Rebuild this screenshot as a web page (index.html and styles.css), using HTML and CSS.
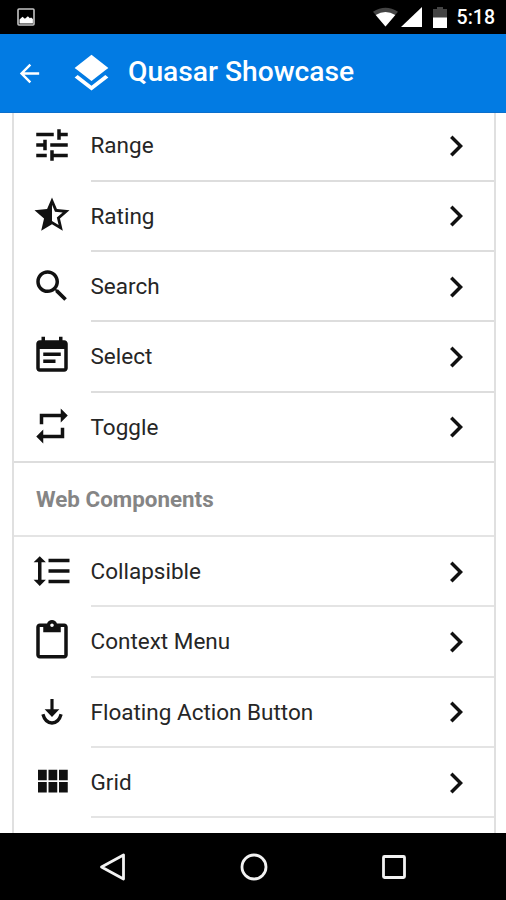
FILE: index.html
```html
<!DOCTYPE html>
<html lang="en">
<head>
<meta charset="utf-8">
<title>Quasar Showcase</title>
<link rel="stylesheet" href="styles.css">
</head>
<body>
<svg class="defs" aria-hidden="true">
  <symbol id="chevron" viewBox="0 0 24 24"><path d="M10 6L8.590 7.410 13.170 12l-4.580 4.590L10 18l6-6z"/></symbol>
</svg>
<div class="status">
  <svg class="photo" viewBox="0 0 18 18"><rect x="1" y="1" width="16" height="16" rx="1" fill="none" stroke="#c4c4c4" stroke-width="1.6"/><path fill="#fff" d="M2.500 15.500v-4l3-2.800 2.400 2 3-2.400 2 2 1.200-.9 1.800 1.600v4.500z"/></svg>
  <div class="indicators">
    <svg class="wifi" viewBox="0 0 26 20"><path fill="#444" d="M0 4.500Q13-4 26 4.500L13 20z"/><path fill="#fff" d="M2.800 8Q13 1.500 23.200 8L13 20z"/></svg>
    <svg class="signal" viewBox="0 0 21 20"><path fill="#fff" d="M21 0v20H0z"/></svg>
    <svg class="battery" viewBox="0 0 14 21"><path fill="#444" d="M0 2h4V0h6v2h4v9H0z"/><path fill="#fff" d="M0 10.500h14V21H0z"/></svg>
    <span class="clock">5:18</span>
  </div>
</div>
<header class="toolbar">
  <svg class="back" viewBox="0 0 24 24"><path d="M20 11H7.830l5.590-5.590L12 4l-8 8 8 8 1.410-1.410L7.830 13H20v-2z"/></svg>
  <svg class="logo" viewBox="0 0 24 24"><path d="M11.990 18.540l-7.370-5.730L3 14.070l9 7 9-7-1.630-1.270-7.380 5.740zM12 16l7.360-5.730L21 9l-9-7-9 7 1.630 1.270L12 16z"/></svg>
  <h1>Quasar Showcase</h1>
</header>
<main>
  <div class="list">
    <div class="row">
      <svg class="icon" viewBox="0 0 24 24"><path d="M3 17v2h6v-2H3zM3 5v2h10V5H3zm10 16v-2h8v-2h-8v-2h-2v6h2zM7 9v2H3v2h4v2h2V9H7zm14 4v-2H11v2h10zm-6-4h2V7h4V5h-4V3h-2v6z"/></svg>
      <div class="content"><span>Range</span><svg class="chevron"><use href="#chevron"/></svg></div>
    </div>
    <div class="row">
      <svg class="icon" viewBox="0 0 24 24"><path d="M22 9.240l-7.190-.62L12 2 9.190 8.630 2 9.240l5.460 4.730L5.820 21 12 17.270 18.180 21l-1.630-7.030L22 9.240zM12 15.400V6.100l1.710 4.040 4.380.38-3.320 2.880 1 4.280L12 15.400z"/></svg>
      <div class="content"><span>Rating</span><svg class="chevron"><use href="#chevron"/></svg></div>
    </div>
    <div class="row">
      <svg class="icon" viewBox="0 0 24 24"><path d="M15.500 14h-.79l-.28-.27C15.410 12.590 16 11.110 16 9.500 16 5.910 13.090 3 9.500 3S3 5.910 3 9.500 5.910 16 9.500 16c1.610 0 3.090-.59 4.230-1.570l.27.28v.79l5 4.990L20.490 19l-4.990-5zm-6 0C7.010 14 5 11.990 5 9.500S7.010 5 9.500 5 14 7.010 14 9.500 11.990 14 9.500 14z"/></svg>
      <div class="content"><span>Search</span><svg class="chevron"><use href="#chevron"/></svg></div>
    </div>
    <div class="row">
      <svg class="icon" viewBox="0 0 24 24"><path d="M17 10H7v2h10v-2zm2-7h-1V1h-2v2H8V1H6v2H5c-1.110 0-1.990.9-1.990 2L3 19c0 1.100.89 2 2 2h14c1.100 0 2-.9 2-2V5c0-1.100-.9-2-2-2zm0 16H5V8h14v11zm-5-5H7v2h7v-2z"/></svg>
      <div class="content"><span>Select</span><svg class="chevron"><use href="#chevron"/></svg></div>
    </div>
    <div class="row last">
      <svg class="icon" viewBox="0 0 24 24"><path d="M7 7h10v3l4-4-4-4v3H5v6h2V7zm10 10H7v-3l-4 4 4 4v-3h12v-6h-2v4z"/></svg>
      <div class="content"><span>Toggle</span><svg class="chevron"><use href="#chevron"/></svg></div>
    </div>
    <h2>Web Components</h2>
    <div class="row">
      <svg class="icon" viewBox="0 0 24 24"><path d="M6 7h2.500L5 3.500 1.500 7H4v10H1.500L5 20.500 8.500 17H6V7zm4-2v2h12V5H10zm0 14h12v-2H10v2zm0-6h12v-2H10v2z"/></svg>
      <div class="content"><span>Collapsible</span><svg class="chevron"><use href="#chevron"/></svg></div>
    </div>
    <div class="row">
      <svg class="icon" viewBox="0 0 24 24"><path d="M19 2h-4.180C14.400.84 13.300 0 12 0c-1.300 0-2.400.84-2.820 2H5c-1.100 0-2 .9-2 2v16c0 1.100.9 2 2 2h14c1.100 0 2-.9 2-2V4c0-1.100-.9-2-2-2zm-7 0c.55 0 1 .45 1 1s-.45 1-1 1-1-.45-1-1 .45-1 1-1zm7 18H5V4h2v3h10V4h2v16z"/></svg>
      <div class="content"><span>Context Menu</span><svg class="chevron"><use href="#chevron"/></svg></div>
    </div>
    <div class="row">
      <svg class="icon" viewBox="0 0 24 24"><path d="M11.100 4.600h1.800v5.800h3.300L12 14.800l-4.200-4.400h3.300z"/><path d="M6.800 13.300Q8.200 18.300 12 18.300T17.200 13.300" fill="none" stroke="#111" stroke-width="1.900"/></svg>
      <div class="content"><span>Floating Action Button</span><svg class="chevron"><use href="#chevron"/></svg></div>
    </div>
    <div class="row">
      <svg class="icon" viewBox="0 0 24 24"><path d="M4 11h5V5H4v6zm0 7h5v-6H4v6zm6 0h5v-6h-5v6zm6 0h5v-6h-5v6zm-6-7h5V5h-5v6zm6-6v6h5V5h-5z"/></svg>
      <div class="content"><span>Grid</span><svg class="chevron"><use href="#chevron"/></svg></div>
    </div>
    <div class="row"></div>
  </div>
</main>
<nav>
  <svg viewBox="0 0 30 30"><path d="M25.500 3v24L3.500 15z"/></svg>
  <svg viewBox="0 0 30 30"><circle cx="15" cy="15" r="12"/></svg>
  <svg viewBox="0 0 30 30"><rect x="4.500" y="4.500" width="21" height="21" rx="1"/></svg>
</nav>
</body>
</html>
```

FILE: styles.css
```css
* { box-sizing: border-box; }
body {
  margin: 0;
  height: 900px;
  display: flex;
  flex-direction: column;
  overflow: hidden;
  background: #fff;
  font-family: Roboto, sans-serif;
}
svg { display: block; flex: none; }
.defs { position: absolute; width: 0; height: 0; }

.status {
  height: 34px;
  flex: none;
  display: flex;
  align-items: center;
  justify-content: space-between;
  padding: 0 11px 0 16.500px;
  background: #000;
  color: #fff;
}
.photo { width: 18px; height: 18px; }
.indicators { display: flex; align-items: center; }
.wifi { width: 25px; height: 20px; }
.signal { width: 21px; height: 20px; margin-left: 3px; }
.battery { width: 14px; height: 21px; margin-left: 11px; }
.clock { margin-left: 10px; font-size: 19.500px; font-weight: 500; line-height: 34px; padding-top: 2px; }

.toolbar {
  height: 79px;
  flex: none;
  display: flex;
  align-items: center;
  padding-left: 15px;
  background: #027be3;
  border-bottom: 1px solid #0b6fcc;
  color: #fff;
  fill: #fff;
}
.back { width: 29px; height: 29px; }
.logo { width: 45px; height: 45px; margin-left: 25px; }
.toolbar h1 { margin: 0 0 3px 14px; font-size: 28.200px; font-weight: 500; line-height: 36px; white-space: nowrap; }

main { flex: 1; min-height: 0; overflow: hidden; padding: 0 10px 0 12px; }
.list {
  margin-top: -1.800px;
  border: solid #e0e0e0;
  border-width: 0 2px;
}
.row { height: 70.350px; display: flex; align-items: center; padding-left: 17px; }
.icon { width: 42px; height: 42px; margin-bottom: 2.500px; fill: #111; }
.content {
  flex: 1;
  height: 100%;
  margin-left: 17.500px;
  padding-right: 17.500px;
  display: flex;
  align-items: center;
  justify-content: space-between;
  border-bottom: 2px solid #ddd;
  color: #262626;
  font-size: 22.500px;
  font-weight: 400;
  white-space: nowrap;
}
.chevron { width: 42px; height: 42px; margin-top: 1px; fill: #111; }
.last { border-bottom: 2px solid #ddd; }
.last .content { border-bottom: 0; }
h2 {
  height: 74px;
  margin: 0;
  padding-left: 22px;
  border-bottom: 2px solid #e4e4e4;
  color: #858585;
  font-size: 22.400px;
  font-weight: 700;
  line-height: 72px;
}
h2 ~ .row .content { border-color: #e4e4e4; }

nav {
  height: 67px;
  flex: none;
  display: flex;
  align-items: center;
  justify-content: space-between;
  padding: 0 97px 0 98px;
  background: #000;
}
nav svg { width: 30px; height: 30px; fill: none; stroke: #f2f2f2; stroke-width: 2.800; stroke-linejoin: round; }
```
